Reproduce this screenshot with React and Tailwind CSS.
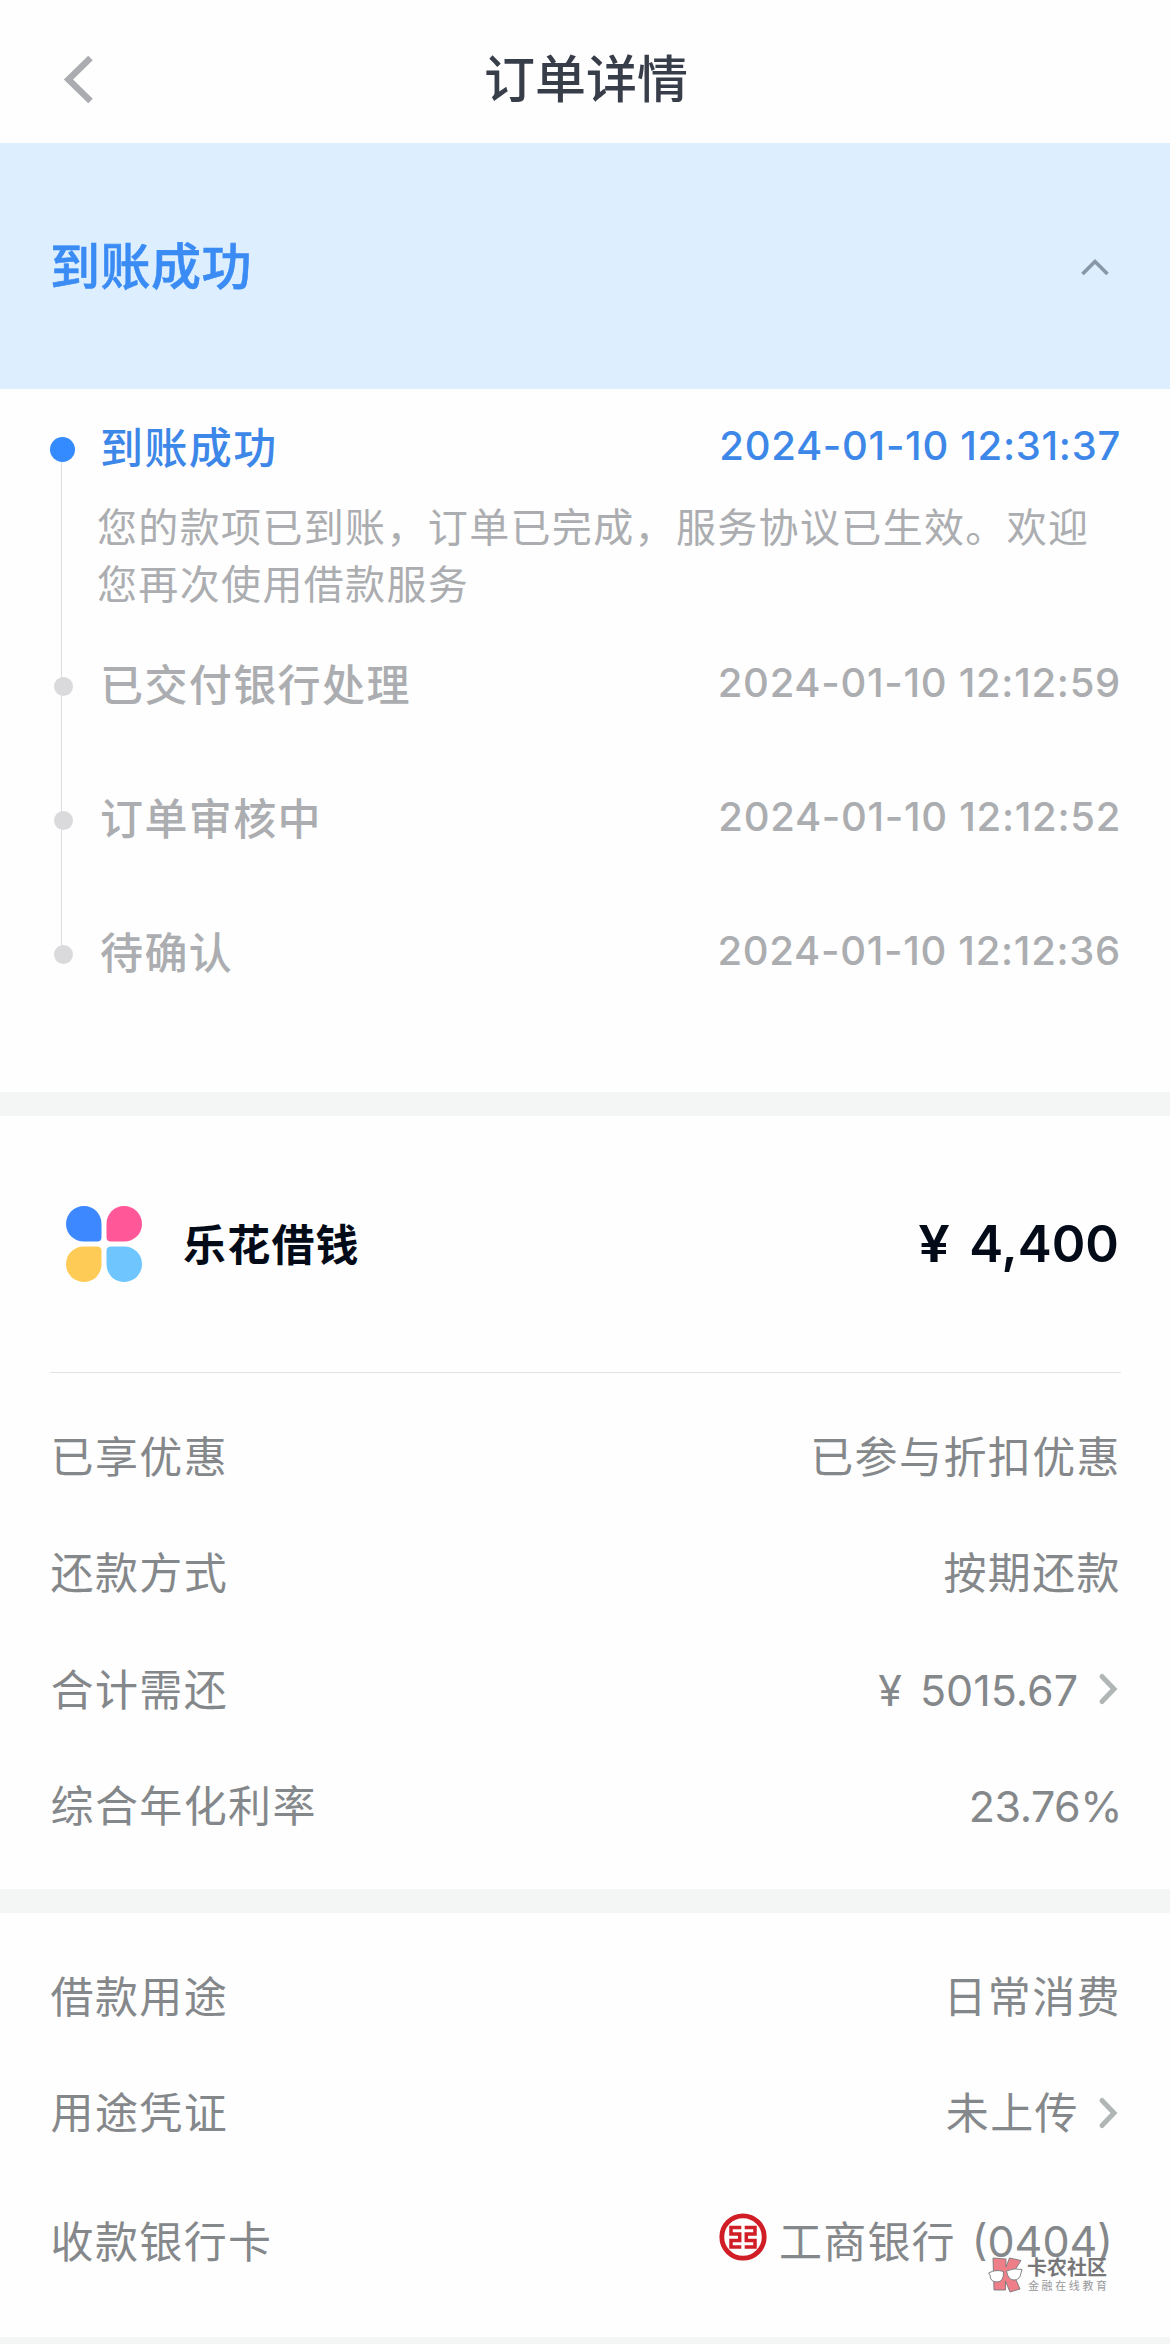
const sans = "font-['Inter','Noto_Sans_CJK_SC',sans-serif]";

const steps = [
  { title: '已交付银行处理', time: '2024-01-10 12:12:59' },
  { title: '订单审核中', time: '2024-01-10 12:12:52' },
  { title: '待确认', time: '2024-01-10 12:12:36' },
];

function Chevron() {
  return (
    <svg className="relative -top-[1px] ml-[20px] mr-[3px] h-[34px] w-[20px]" viewBox="0 0 20 34" fill="none">
      <path d="M4 4.500L16 17L4 29.500" stroke="#b0b6b5" strokeWidth="5" strokeLinecap="round" />
    </svg>
  );
}

function Row({ label, children, className = 'h-[116.5px]' }) {
  return (
    <div className={'flex items-center justify-between pl-[50.5px] pr-[49px] ' + className}>
      <span className="tracking-[1.4px]">{label}</span>
      <div className="flex items-center">{children}</div>
    </div>
  );
}

function PetalLogo() {
  return (
    <svg className="ml-[16px] h-[76px] w-[76px] shrink-0" viewBox="0 0 76 76">
      <path d="M18 0C28 0 35.500 8 35.500 18V31Q35.500 35.500 31 35.500H18C8 35.500 0 28 0 18S8 0 18 0Z" fill="#3d87ff" />
      <path d="M58 0C48 0 40.500 8 40.500 18V31Q40.500 35.500 45 35.500H58C68 35.500 76 28 76 18S68 0 58 0Z" fill="#ff5798" />
      <path d="M18 76C28 76 35.500 68 35.500 58V45Q35.500 40.500 31 40.500H18C8 40.500 0 48 0 58S8 76 18 76Z" fill="#ffcb57" />
      <path d="M58 76C48 76 40.500 68 40.500 58V45Q40.500 40.500 45 40.500H58C68 40.500 76 48 76 58S68 76 58 76Z" fill="#6fc6ff" />
    </svg>
  );
}

function BankLogo() {
  return (
    <svg className="relative -top-[5px] mr-[12px] h-[48px] w-[48px]" viewBox="0 0 48 48" fill="none" stroke="#d01d26">
      <circle cx="24" cy="24" r="21.200" strokeWidth="4.800" />
      <g strokeWidth="3.500">
        <path d="M22.300 14.500H12V21H20.700V27.500H12V34H22.300" />
        <path d="M25.700 14.500H36V21H27.300V27.500H36V34H25.700" />
      </g>
    </svg>
  );
}

function Watermark() {
  return (
    <div className="absolute right-[63px] top-[2256px] flex items-start gap-[3px] leading-none">
      <svg className="h-[38px] w-[36px]" viewBox="0 0 36 38" fill="#ee7f88" stroke="#77787a" strokeWidth="0.900">
        <path d="M5 2L18 3V11L21.500 2L33 4.500L25 17L32 33L22 36L17.500 25V34H6Z" />
        <path d="M0.500 17Q8 13 15.500 15.500Q16 26 9 26Q2 26 2 19Z" fill="#fff" />
        <path d="M18.500 15Q26 11.500 34 13.500L33 17Q32 24 26 24Q20 24 18.500 15Z" fill="#fff" />
      </svg>
      <div className="flex flex-col gap-[3px] pt-[2px]">
        <span className="text-[20px] font-bold leading-[20px] text-[#77777a]">卡农社区</span>
        <span className="-mr-[3px] pl-[1px] text-[11px] leading-[11px] tracking-[2.600px] text-[#98989b]">金融在线教育</span>
      </div>
    </div>
  );
}

export default function App() {
  return (
    <div className={'relative h-[2344px] w-[1170px] overflow-hidden bg-[#fefefe] text-[43px] leading-none text-[#85888b] ' + sans}>
      <header className="relative flex h-[143px] items-center justify-center pl-[2px] pt-[16px]">
        <svg className="absolute left-[62px] top-[55px] h-[49px] w-[32px]" viewBox="0 0 32 49" fill="none">
          <path d="M28.500 3L6.500 24.500L28.500 46" stroke="#aaacb0" strokeWidth="6.500" />
        </svg>
        <h1 className="text-[51px] font-medium text-[#373d49]">订单详情</h1>
      </header>

      <section className="flex h-[246px] items-center justify-between bg-[#ddeeff] pl-[50px] pr-[60px] pt-[2px]">
        <h2 className="text-[50px] font-medium tracking-[0.500px] text-[#3a8bf4] [-webkit-text-stroke:0.6px_#3a8bf4]">到账成功</h2>
        <svg className="h-[20px] w-[30px]" viewBox="0 0 30 20" fill="none">
          <path d="M2.500 17L15 4.500L27.500 17" stroke="#8896a7" strokeWidth="3.600" />
        </svg>
      </section>

      <section className="relative h-[703px] pl-[50px] pr-[49px]">
        <div className="absolute left-[61px] top-[70px] h-[490px] w-[1px] bg-[#dddddf]" />
        <div className="flex h-[118px] items-center text-[#3d87e8]">
          <i className="relative top-[1px] h-[25px] w-[25px] rounded-full bg-[#338bff]" />
          <span className="ml-[25px] flex-1 font-medium tracking-[1.400px]">到账成功</span>
          <time className="relative -top-[2px] text-[40px] font-medium tracking-[0.700px]">2024-01-10 12:31:37</time>
        </div>
        <p className="-mt-[8px] ml-[47px] text-[40px] leading-[57px] tracking-[1.350px] text-[#abadb0]">
          您的款项已到账，订单已完成，服务协议已生效。欢迎
          <br />
          您再次使用借款服务
        </p>
        <div className="mt-[6px] text-[#abadb0]">
          {steps.map((s) => (
            <div key={s.title} className="flex h-[134px] items-center">
              <i className="relative ml-[4px] h-[19px] w-[19px] rounded-full bg-[#dadadc]" />
              <span className="relative -top-[1px] ml-[27px] flex-1 font-medium tracking-[1.400px]">{s.title}</span>
              <time className="relative -top-[3px] text-[40px] font-medium tracking-[0.700px]">{s.time}</time>
            </div>
          ))}
        </div>
      </section>

      <div className="h-[24px] bg-[#f3f6f5]" />

      <section className="h-[773px]">
        <div className="ml-[50px] mr-[49px] flex h-[257px] items-center border-b border-[#e1e3e4] text-[#040b18]">
          <PetalLogo />
          <span className="relative top-px ml-[41px] flex-1 font-semibold tracking-[1.200px]">乐花借钱</span>
          <span className="relative -top-[1px] mr-[2px] flex gap-[19px] text-[51px] font-semibold">
            <span className="inline-block origin-right scale-x-110">¥</span>
            <span>4,400</span>
          </span>
        </div>
        <div className="mt-[26px]">
          <Row label="已享优惠"><span className="tracking-[1.400px]">已参与折扣优惠</span></Row>
          <Row label="还款方式"><span className="tracking-[1.400px]">按期还款</span></Row>
          <Row label="合计需还">
            <span className="flex gap-[18px]">
              <span>¥</span>
              <span>5015.67</span>
            </span>
            <Chevron />
          </Row>
          <Row label="综合年化利率"><span className="-mr-[1px] tracking-[-0.500px]">23.76%</span></Row>
        </div>
      </section>

      <div className="h-[24px] bg-[#f3f6f5]" />

      <section className="h-[424px] pt-[26px]">
        <Row label="借款用途"><span className="tracking-[1.400px]">日常消费</span></Row>
        <Row label="用途凭证"><span className="-mr-[1px] tracking-[1.400px]">未上传</span><Chevron /></Row>
        <Row label="收款银行卡" className="h-[140px]">
          <BankLogo />
          <span className="tracking-[1.200px]">工商银行</span>
          <span className="relative -top-[1px] ml-[16px] mr-[8px]">(0404)</span>
        </Row>
      </section>

      <div className="h-[7px] bg-[#f3f6f5]" />
      <Watermark />
    </div>
  );
}
